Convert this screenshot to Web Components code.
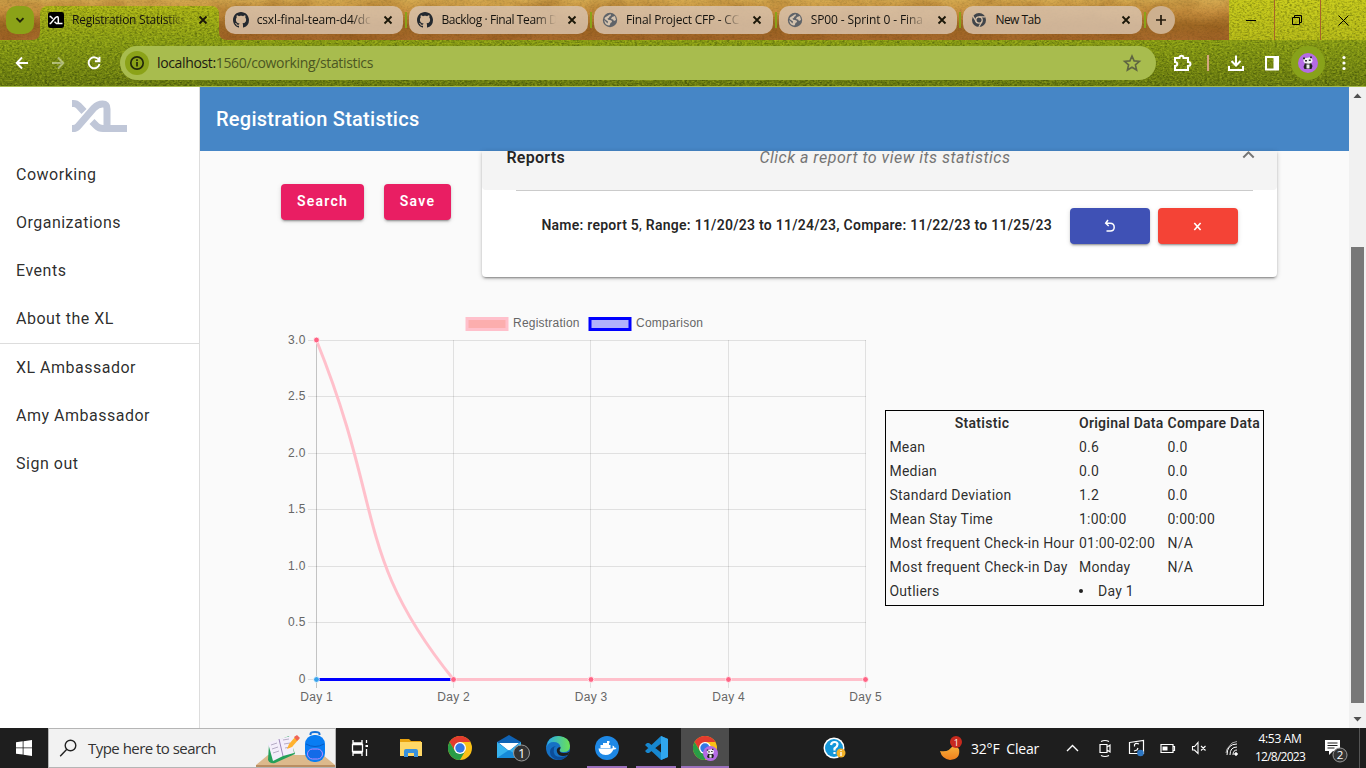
<!DOCTYPE html>
<html lang="en">
<head>
<meta charset="utf-8">
<title>Registration Statistics</title>
<style>
html,body{margin:0;height:100%;overflow:hidden}
body{display:grid;grid-template-rows:87px 641px 40px;width:1366px;height:768px;font-family:Roboto,"Liberation Sans",sans-serif}
</style>
</head>
<body>
<browser-chrome></browser-chrome>
<app-viewport></app-viewport>
<task-bar></task-bar>

<template id="t-chrome">
<style>
:host{display:grid;grid-template-rows:40px 46px 1px;position:relative;overflow:hidden;font-family:"Open Sans","Noto Sans",sans-serif;color:#1c1a12;isolation:isolate}
.tex{position:absolute;inset:0;z-index:-1}
.tex filter{color-interpolation-filters:sRGB}
.strip{display:flex;align-items:center;padding-left:6px;height:40px;box-sizing:border-box}
.menu{width:28px;height:28px;border-radius:10px;background:#8ba218;display:grid;place-items:center;margin-right:6px}
.tabs{display:flex;height:40px}
.plus{width:28px;height:28px;border-radius:50%;background:#cdb08f;display:grid;place-items:center;margin-left:-1.200px}
.win{display:flex;margin-left:auto;width:137px;height:40px}
.win svg{flex:1;border-left:1px solid #a8642a}
.win svg:first-child{border:0;flex:none;width:45px}
.bar{display:flex;align-items:center;height:46px;padding-left:10px;box-sizing:border-box}
.bar>svg{flex:none}
.nav{margin-right:12px}
.omni{display:flex;align-items:center;width:1036px;height:34px;border-radius:17px;background:#a8bc4e;box-sizing:border-box;padding:0 12px 0 5px;margin-left:2px;font-size:14px}
.info{width:24px;height:24px;border-radius:50%;background:#8ba218;display:grid;place-items:center;margin-right:8px}
.star{margin-left:auto}
.omni fit-text{position:relative;top:-1px}
.path{color:#4c5722}
.sep{width:2px;height:16px;background:#d3a780;margin:0 15px 0 13px}
.ava{width:34px;height:34px;border-radius:50%;background:#88a21a;display:grid;place-items:center}
.line{background:#a8bc4e}
</style>
<svg class="tex" width="1366" height="87">
<defs>
<linearGradient id="wood" x2="0" y2="1"><stop offset="0" stop-color="#d5aa50"/><stop offset=".3" stop-color="#c8903f"/><stop offset=".65" stop-color="#9f6824"/><stop offset="1" stop-color="#a8692c"/></linearGradient>
<linearGradient id="grass" x2="0" y2="1"><stop offset="0" stop-color="#b2b816"/><stop offset=".5" stop-color="#869a14"/><stop offset="1" stop-color="#64760f"/></linearGradient>
<linearGradient id="lime" x2="0" y2="1"><stop offset="0" stop-color="#c6c81c"/><stop offset="1" stop-color="#b5b818"/></linearGradient>
<filter id="n" x="0" y="0" width="1" height="1"><feTurbulence type="fractalNoise" baseFrequency=".4 .6" numOctaves="2" seed="4"/><feColorMatrix values="0 0 0 0 0  0 0 0 0 0.05  0 0 0 0 0  2.6 0 0 0 -1.1"/></filter>
<filter id="n2" x="0" y="0" width="1" height="1"><feTurbulence type="fractalNoise" baseFrequency=".4 .6" numOctaves="2" seed="9"/><feColorMatrix values="0 0 0 0 .9  0 0 0 0 .95  0 0 0 0 .2  2.6 0 0 0 -1.1"/></filter>
<filter id="w" x="0" y="0" width="1" height="1"><feTurbulence type="fractalNoise" baseFrequency=".03 .06" numOctaves="3" seed="7"/><feColorMatrix values="0 0 0 0 .5  0 0 0 0 .28  0 0 0 0 .05  2 0 0 0 -.8"/></filter>
<clipPath id="g"><path d="M0 40H32Q40 40 40 32V14Q40 6 48 6H211Q219 6 219 14V32Q219 40 227 40H1229V0H1366V86H0Z"/></clipPath>
</defs>
<rect width="1229" height="40" fill="url(#wood)"/><rect width="1229" height="40" filter="url(#w)" opacity=".35"/><rect width="1229" height="40" filter="url(#n)" opacity=".1"/>
<g clip-path="url(#g)"><rect width="1366" height="86" fill="url(#grass)"/><rect x="1229" width="137" height="40" fill="url(#lime)"/><rect width="1366" height="86" filter="url(#n)" opacity=".3"/><rect width="1366" height="86" filter="url(#n2)" opacity=".3"/></g>
</svg>
<div class="strip">
<div class="menu"><svg width="12" height="12"><path d="M2.5 4.2 6 7.7 9.500 4.200" fill="none" stroke="#20240a" stroke-width="1.9"/></svg></div>
<div class="tabs">
<chrome-tab active icon="xl" w="114">Registration Statistics</chrome-tab>
<chrome-tab icon="github" w="114">csxl-final-team-d4/dc</chrome-tab>
<chrome-tab icon="github" w="116">Backlog · Final Team D</chrome-tab>
<chrome-tab icon="globe" w="113">Final Project CFP - CC</chrome-tab>
<chrome-tab icon="globe" w="112">SP00 - Sprint 0 - Fina</chrome-tab>
<chrome-tab icon="newtab" w="45">New Tab</chrome-tab>
</div>
<div class="plus"><svg width="12" height="12"><path d="M6 1v10M1 6h10" stroke="#241a0e" stroke-width="1.7"/></svg></div>
<div class="win">
<svg height="40" viewBox="0 0 45 40"><path d="M17 20.500h10" stroke="#000"/></svg>
<svg height="40" viewBox="0 0 45 40"><path d="M17.500 17.500h7v7h-7zM19.500 17v-1.500h7v7H25" fill="none" stroke="#000"/></svg>
<svg height="40" viewBox="0 0 45 40"><path d="M17.500 15.500l10 10m0-10-10 10" stroke="#000"/></svg>
</div>
</div>
<div class="bar">
<svg class="nav" width="24" height="24" fill="none" stroke="#fff" stroke-width="1.9"><path d="M18 12H7M12 6.500 6.700 12l5.300 5.500"/></svg>
<svg class="nav" width="24" height="24" fill="none" stroke="#fff" stroke-opacity=".42" stroke-width="1.900"><path d="M6 12h11M12 6.500 17.300 12 12 17.500"/></svg>
<svg class="nav" width="24" height="24" fill="none" stroke="#fff" stroke-width="1.900"><path d="M17 9.200A5.500 5.500 0 1 0 17.500 13M17.500 5.800v4.400h-4.600"/></svg>
<div class="omni"><span class="info"><svg width="16" height="16" fill="none" stroke="#23290b" stroke-width="1.700"><circle cx="8" cy="8" r="6.200"/><path d="M8 7v4.500M8 4.300v1.700"/></svg></span>
<fit-text w="216">localhost:<span class="path">1560/coworking/statistics</span></fit-text>
<svg class="star" width="24" height="24" viewBox="0 0 24 24"><path d="m12 5 2.100 4.900 5.300.4-4 3.500 1.200 5.200-4.600-2.800L7.400 19l1.200-5.200-4-3.500 5.300-.4z" fill="none" stroke="#5f6542" stroke-width="1.600"/></svg></div>
<svg width="24" height="24" style="margin-left:14px" fill="none" stroke="#fff" stroke-width="2"><path d="M5 7h4.500q0-2.300 2-2.300t2 2.300H18v4q2.500 0 2.500 2t-2.500 2v4H5v-4q2.300-.3 2.300-2T5 11z"/></svg>
<i class="sep"></i>
<svg width="24" height="24" fill="none" stroke="#fff" stroke-width="2"><path d="M12 4.500v9.500M7.500 10l4.500 4.500L16.500 10M5 15v4h14v-4"/></svg>
<svg width="24" height="24" style="margin-left:12px" fill="none" stroke="#fff" stroke-width="2"><path d="M6 6h12v12.500H6z"/><path d="M16 6v12" stroke-width="5"/></svg>
<span class="ava" style="margin-left:7px"><panda-icon></panda-icon></span>
<svg width="6" height="20" style="margin-left:16px" fill="#fff"><circle cx="3" cy="4.500" r="1.600"/><circle cx="3" cy="10" r="1.600"/><circle cx="3" cy="15.500" r="1.600"/></svg>
</div>
<div class="line"></div>
</template>

<template id="t-tab">
<style>
:host{display:flex;width:184.700px;height:40px;align-items:center;font-size:12px}
.b{display:flex;align-items:center;width:178.700px;height:28px;border-radius:10px;background:rgba(216,194,172,.85);box-sizing:border-box;padding-left:8px}
:host([active]) .b{background:none}
.i{width:16px;height:16px;margin-right:8px;flex:none}
.t{width:115px;overflow:hidden;white-space:nowrap;-webkit-mask:linear-gradient(90deg,#000 82%,transparent);color:#15130f;line-height:20px}
.t.short{-webkit-mask:none}
.x{margin-left:10px;flex:none}
.s{width:2px;height:16px;background:#8ba218;margin-left:2px}
:host([active]) .s{background:none}
</style>
<div class="b"><span class="i"></span><span class="t"><fit-text><slot></slot></fit-text></span><svg class="x" width="12" height="12"><path d="m2.500 2.500 7 7m0-7-7 7" stroke="#1a1608" stroke-width="1.800"/></svg></div><i class="s"></i>
</template>

<template id="t-view">
<style>
:host{display:grid;grid-template-columns:200px 1149px 17px;height:641px;overflow:hidden}
main{background:#fafafa;overflow:hidden;display:flex;flex-direction:column}
header{height:64px;flex:none;background:#4686c6;color:#fff;font-weight:500;font-size:20px;line-height:64px;padding-left:16px}
.top{display:flex;height:149px;align-items:flex-start}
.acts{display:flex;gap:20px;padding:33px 0 0 81px;width:201px}
.bot{display:flex;align-items:flex-start}
stat-table{margin:110px 0 0 3px}
</style>
<side-nav></side-nav>
<main><header><fit-text w="203.500">Registration Statistics</fit-text></header>
<div class="top"><div class="acts"><mat-btn w="83" tw="51">Search</mat-btn><mat-btn w="67" tw="35.500">Save</mat-btn></div><report-panel></report-panel></div>
<div class="bot"><line-chart></line-chart><stat-table></stat-table></div>
</main>
<scroll-bar></scroll-bar>
</template>

<template id="t-side">
<style>
:host{display:block;background:#fff;border-right:1px solid #ddd;box-sizing:border-box;font-size:16px;color:rgba(0,0,0,.84);font-weight:400}
svg{display:block;margin:13px 0 0 72px}
nav{padding-top:18px}
nav div{height:48px;line-height:48px;padding-left:16px}
hr{border:0;height:1px;background:#ddd;margin:0}
</style>
<svg width="55" height="33" fill="none" stroke="#c0c7d8" stroke-width="7"><path d="M0 3.500h1.500q3 0 5 2.200L12 11.500M0 28.500h1q3 0 5-2.200L22 8q4-4 8.500-4 4.500 0 4.500 5v19.500M55 28.500H31q-4 0-6.500-2.500L20 21.500"/></svg>
<nav><div><fit-text w="80.500">Coworking</fit-text></div><div><fit-text w="105">Organizations</fit-text></div><div><fit-text w="50.500">Events</fit-text></div><div><fit-text w="98">About the XL</fit-text></div><hr><div><fit-text w="120">XL Ambassador</fit-text></div><div><fit-text w="134">Amy Ambassador</fit-text></div><div><fit-text w="62.500">Sign out</fit-text></div></nav>
</template>

<template id="t-btn">
<style>
:host{display:block;height:36px;border-radius:4px;background:var(--c,#e91e63);color:#fff;font-weight:600;font-size:14px;line-height:35px;text-align:center;box-shadow:0 3px 1px -2px rgba(0,0,0,.2),0 2px 2px rgba(0,0,0,.14),0 1px 5px rgba(0,0,0,.12)}
</style><slot></slot>
</template>

<template id="t-panel">
<style>
:host{display:block;width:795px;height:126px;margin-left:.4px;background:#fff;border-radius:0 0 4px 4px;box-shadow:0 3px 1px -2px rgba(0,0,0,.2),0 2px 2px rgba(0,0,0,.14),0 1px 5px rgba(0,0,0,.2);color:rgba(0,0,0,.87)}
.h{display:flex;height:39px;background:#f4f4f4;border-radius:0 0 4px 4px;padding-left:24px;font-size:16px;line-height:13px}
.h b{font-weight:600;width:253px}
.h i{color:#757575}
.h svg{margin-left:auto;margin-right:22px;margin-top:-1px}
.r{border-top:1px solid #cbcbcb;margin:0 24.500px 0 34px;padding:17px 0 0 25px;display:flex;font-size:14px;font-weight:600;line-height:35px}
mat-btn svg{display:block;margin:auto}
</style>
<div class="h"><b><fit-text w="58.500">Reports</fit-text></b><i><fit-text w="251">Click a report to view its statistics</fit-text></i><svg width="13" height="12"><path d="M1.300 7.500 6.500 2.300l5.200 5.200" fill="none" stroke="#757575" stroke-width="2"/></svg></div>
<div class="r"><fit-text w="510.500">Name: report 5<span style="font-weight:400">,</span> Range: 11/20/23 to 11/24/23, Compare: 11/22/23 to 11/25/23</fit-text>
<mat-btn w="80" style="--c:#3f51b5;margin-left:17.700px"><svg width="14" height="36" fill="none" stroke="#fff" stroke-width="1.500"><path d="M5 12 2.700 15.200l3 2.800M3 15.200H7q4.200 0 4.200 4t-4.200 3.800H3.500"/></svg></mat-btn>
<mat-btn w="80" style="--c:#f44336;margin-left:8px"><svg width="14" height="36"><path d="m3.300 15 6.300 7m0-7-6.300 7" stroke="#fff" stroke-width="1.600"/></svg></mat-btn></div>
</template>

<template id="t-chart">
<style>:host{display:block;width:682px;height:428px}svg{display:block;font:12px "Liberation Sans",Arial,sans-serif}</style>
<svg width="682" height="428" viewBox="200 300 682 428"></svg>
</template>

<template id="t-stat">
<style>
:host{display:block;font-size:14px;color:rgba(0,0,0,.84)}
table{border:1px solid #000;border-spacing:2px;width:379px;table-layout:fixed;line-height:20px;height:196px}
tr{height:22px}
td,th{padding:0 1px 2px 1.500px;white-space:nowrap;height:20px;box-sizing:content-box}th{font-weight:600}
td fit-text,th fit-text{vertical-align:top}
.p{display:flex;align-items:center;height:20px}.p::before{content:"";width:4px;height:4px;border-radius:50%;background:#222;margin-right:15px}
</style>
<table><colgroup><col style="width:187.500px"><col style="width:86.500px"><col></colgroup><tbody></tbody></table>
</template>

<template id="t-scroll">
<style>:host{display:flex;flex-direction:column;align-items:center;background:#f1f1f1}i{width:13px;height:456px;background:#787878;margin-top:143px}svg{display:block}</style>
<svg width="17" height="17"><path d="M4.500 11 8.500 6.500l4 4.500z" fill="#505050"/></svg><i></i>
<svg width="17" height="17" style="margin-top:auto"><path d="M4.500 6 8.500 10.500l4-4.500z" fill="#505050"/></svg>
</template>

<template id="t-task">
<style>
:host{display:flex;height:40px;background:#1e1e1e;color:#fff;font-family:"Open Sans","Noto Sans",sans-serif}
svg{display:block;flex:none}
.search{width:288px;height:40px;box-sizing:border-box;background:#f2f2f2;border:1px solid #b5b5b5;color:#333;display:flex;font-size:15px;line-height:38px}
.app{width:40px;height:40px;margin:0 4.500px 0 4.500px;box-sizing:border-box;display:grid;place-items:center}
.run{border-bottom:2px solid #9a70bd;padding-top:2px}
.on{background:#4c4c4c;width:48px;margin:0 0 0 .5px;position:relative}
.on panda-icon{position:absolute;left:22px;top:18px;transform:scale(.75);transform-origin:0 0}
.tray{margin-left:auto;display:flex;align-items:center}
.clock{width:70px;text-align:center;font-size:12px;line-height:18px}
</style>
<svg width="48" height="40" fill="#fff"><path d="M16 14.300 22.700 13.300V19.500H16zM23.500 13.200 32 12v7.500h-8.500zM16 20.300h6.700v6.300L16 25.700zM23.500 20.300H32V28l-8.500-1.200z"/></svg>
<div class="search"><svg width="39" height="38" fill="none" stroke="#222" stroke-width="1.400"><circle cx="21.500" cy="16.500" r="5.300"/><path d="m17.800 20.300-6.600 6.900"/></svg><fit-text w="128">Type here to search</fit-text>
<svg width="79" height="38" viewBox="0 0 79 38" style="margin-left:auto"><path d="M12 26H67l12 10v2H0v-2z" fill="#dcb98c"/><path d="M0 36h79v2H0z" fill="#b98e61"/><path d="m13 15 20-8 6 18-20 9q-5 1-7-3z" fill="#24a05a"/><path d="m12 14 11-4 12-3 3 17-11 3-10 5z" fill="#f4eefb"/><path d="m23 10 4 17" stroke="#9c87b8"/><path d="m15 16 6-2m-5 6 6-2m-5 6 6-2m4-11 6-1m-5 5 6-1m-5 5 5-1" stroke="#a69bb8" stroke-width=".8"/><path d="m31 20 2-5 7-8 3 3-7 8z" fill="#ffb22e"/><path d="m38 8 3-2 3 3-3 3z" fill="#ef6455"/><rect x="49" y="6" width="20" height="27" rx="9" fill="#087df3"/><path d="M54.500 6V5q0-2 4.500-2t4.500 2v1" fill="none" stroke="#1270d8" stroke-width="2"/><path d="M50 15q9 5 18 0" stroke="#075ac4" fill="none"/><rect x="51.500" y="20" width="15" height="10" rx="5" fill="#126be8" stroke="#b78bff"/></svg></div>
<svg width="46" height="40" fill="none" stroke="#fff" stroke-width="1.300"><path d="M17 12v3h9v-3M17 28v-3h9v3M16.500 16.500h10v7h-10zM30.500 12v3M30.500 21v7"/><path d="M29.500 18h2.500" stroke-width="2"/></svg>
<div class="app" style="margin-left:9px"><svg width="22" height="20"><path d="M0 1h9l2 2H21v15H0z" fill="#e9a30f"/><path d="M0 4h22v14H0z" fill="#ffd867"/><path d="M4 19v-6q0-2 2-2h10q2 0 2 2v6h-4v-4H8v4z" fill="#3991dc"/></svg></div>
<div class="app"><chrome-logo></chrome-logo></div>
<div class="app"><svg width="34" height="28" viewBox="0 0 34 28" style="margin-left:8px"><path d="M0 8 12 1l12 7v15H0z" fill="#0f62b4"/><path d="M2 9h20L12 17z" fill="#fff"/><path d="m0 8 12 9L24 8v16H0z" fill="#37b3ee"/><path d="m0 24 12-8 12 8z" fill="#168ad8"/><circle cx="24.500" cy="19" r="8" fill="#333" stroke="#999"/><text x="21" y="23.800" font-size="13" fill="#fff">1</text></svg></div>
<div class="app"><svg width="24" height="24"><defs><linearGradient id="e"><stop stop-color="#28a9ed"/><stop offset="1" stop-color="#6be254"/></linearGradient></defs><circle cx="12" cy="12" r="12" fill="#1671c4"/><path d="M.5 11Q2 0 12.500 0 24 1 24 10q0 6-6.500 6-4 0-4-2 1-1 1-3-1-5-7-5-5 0-7 5" fill="url(#e)"/><path d="M8 12q-2 9 7 9 3 0 7-2-4 5-10 5-8-2-8-8 0-5 6-6-2 1-2 2" fill="#0c4d99"/><path d="M14.500 11q0 2-1 3 0 3 4 3 4 0 6-1.500l-1.500 3.200Q17 21 13 19q-3-3-2-6 1-2 3.500-2" fill="#1e1e1e"/></svg></div>
<div class="app run"><svg width="24" height="24"><circle cx="12" cy="12" r="12" fill="#1e88e5"/><path d="M3.500 12.500H17q1-.5.500-3 2 .5 2 2.300 1.500-.3 2 .2-1 1.800-3 1.500Q16 19 10.500 19 4 19 3.500 12.500M5.500 9h10v3h-10zM8 7h6v2H8zM12 5h2.500v2H12z" fill="#fff"/></svg></div>
<div class="app run"><svg width="24" height="24"><path d="m17 0 7 3v18l-7 3L1 9l2-2 2 0 12 9.500V7.500L5 17H3l-2-2z" fill="#1787cf"/><path d="m17 0 7 3v18l-7 3z" fill="#30a6ed"/></svg></div>
<div class="app run on"><chrome-logo></chrome-logo><panda-icon></panda-icon></div>
<div class="tray">
<svg width="24" height="24" style="margin-right:92px"><circle cx="11" cy="12" r="10.500" fill="#fff"/><circle cx="11" cy="12" r="9" fill="#1597d9"/><path d="M8 9q.5-3 3.500-3 3 0 3 2.500 0 2-3 4v2M11.500 16v2" fill="none" stroke="#fff" stroke-width="2.200"/><circle cx="18" cy="17" r="4.500" fill="#f3b229"/><path d="M18 14v1m0 1v4" stroke="#fff" stroke-width="1.300"/></svg>
<svg width="26" height="28" style="margin-right:6px"><defs><linearGradient id="m" x2="0" y2="1"><stop stop-color="#f8ba42"/><stop offset="1" stop-color="#ef7f1c"/></linearGradient></defs><path d="M1 17q9 2 14-7l5 5q2 10-9 11-8-1-10-9" fill="url(#m)"/><circle cx="17" cy="8" r="6" fill="#c72a1e"/><text x="14.800" y="11.500" font-size="9" fill="#fff">1</text></svg>
<fit-text w="68" style="font-size:14px">32°F  Clear</fit-text>
<svg width="30" height="40" style="margin-left:19px" fill="none" stroke="#fff" stroke-width="1.400"><path d="m9 23 5.500-5.500L20 23"/></svg>
<svg width="34" height="40" fill="none" stroke="#fff" stroke-width="1.200"><path d="M12 16.500h7v8h-7zM19 19l3-2v7l-3-2M13 13.500q4-2 8 0M13 27.500q4 2 8 0"/></svg>
<svg width="32" height="40" fill="none" stroke="#fff" stroke-width="1.200"><path d="m7.500 14.500 14-2v13h-14zM17 16q-3-1.500-4.500.5v2M12 23l3-1 1-2"/><circle cx="18.500" cy="25" r="3.300" fill="#2d76c2" stroke="none"/></svg>
<svg width="32" height="40" fill="none" stroke="#fff" stroke-width="1.200"><path d="M7 16.500h12v8H7zM19 18.500h1.500v4H19"/><path d="M8.500 18.500h5v4h-5z" fill="#fff" stroke="none"/></svg>
<svg width="32" height="40" fill="none" stroke="#fff" stroke-width="1.100"><path d="M6.500 18.500h2l3.500-4v11l-3.500-3.500h-2zM15 18l4.500 4.500m0-4.500-4.500 4.500"/></svg>
<svg width="27" height="40" fill="none" stroke="#fff" stroke-width="1"><path d="M9 27q0-11 10-11M12 27q0-8 7-8M15 27q0-5 4-5"/><circle cx="18" cy="26" r="1.300" fill="#fff"/><path d="m8 25 1-4 5-6 5-1.500" opacity=".6"/></svg>
<div class="clock"><fit-text w="43">4:53 AM</fit-text><br><fit-text w="50">12/8/2023</fit-text></div>
<svg width="51" height="40"><path d="M10 12h15v11H18l-4 4v-4h-4z" fill="#fff"/><path d="M12.500 15h10M12.500 17.500h10M12.500 20h7" stroke="#1e1e1e"/><circle cx="25" cy="27" r="7" fill="#333" stroke="#999"/><text x="21.800" y="31.300" font-size="11.500" fill="#fff">2</text><path d="M44.500 0v40" stroke="#555"/></svg>
</div>
</template>

<script>
const tpl = id => document.getElementById(id).content.cloneNode(true);
const define = (name, id, init) => customElements.define(name, class extends HTMLElement {
  connectedCallback() {
    if (this.shadowRoot) return;
    const root = this.attachShadow({mode: 'open'});
    root.append(tpl(id));
    if (init) init(this, root);
  }
});

/* Text run whose tracking is adjusted to reach a given advance width. */
customElements.define('fit-text', class extends HTMLElement {
  connectedCallback() {
    if (!this.shadowRoot) this.attachShadow({mode: 'open'}).innerHTML = '<style>:host{display:inline-block;white-space:pre;flex:none}</style><slot></slot>';
    this.fit();
  }
  fit() {
    const w = parseFloat(this.getAttribute('w'));
    if (!w) return;
    this.style.letterSpacing = '0px';
    const n = (this.dataset.n || this.textContent).length;
    this.style.letterSpacing = ((w - this.getBoundingClientRect().width) / n) + 'px';
  }
});

const draw = (name, css, svg) => customElements.define(name, class extends HTMLElement {
  connectedCallback() {
    if (!this.shadowRoot) this.attachShadow({mode: 'open'}).innerHTML = `<style>:host{display:block;${css}}svg{display:block}</style>${svg}`;
  }
});
draw('chrome-logo', 'width:24px;height:24px', '<svg width="24" height="24"><circle cx="12" cy="12" r="12" fill="#fbc116"/><path d="M1.600 6A12 12 0 0 1 22.400 6H12L7 15z" fill="#e33b2e"/><path d="M1.600 6A12 12 0 0 0 12 24l5.200-9L12 17.500 7 15z" fill="#299c46"/><circle cx="12" cy="12" r="6" fill="#fff"/><circle cx="12" cy="12" r="4.700" fill="#3478e5"/></svg>');
draw('panda-icon', 'width:20px;height:20px', '<svg width="20" height="20"><circle cx="10" cy="10" r="10" fill="#b56be4"/><path d="M7 10h6l1.500 3-1 3H6.500l-1-2z" fill="#222"/><path d="M8.500 11.500h3v4h-3z" fill="#eee"/><path d="M5.500 5.500 13.500 4l1 3.500q0 3-4 3.200-4.500 0-5-2.500z" fill="#f3f3f3"/><path d="M5 4.500h2v1.800H5zM12 3.500h2v1.800h-2zM7 7h2v1.500H7zM10.800 6.500h2V8h-2z" fill="#333"/></svg>');

const ICONS = {
  xl: '<svg width="16" height="16"><rect width="16" height="16" rx="2.500" fill="#000"/><path d="M1.500 4.500h1l2.300 2.300M1.500 11.500h1L7.500 5.500q2.800-2 2.800 1V11.500M14.500 11.500H8.500L6.500 9.700" stroke="#fff" stroke-width="1.500" fill="none"/></svg>',
  github: '<svg width="16" height="16" viewBox="0 0 16 16"><path fill="#24292f" d="M8 0C3.580 0 0 3.580 0 8c0 3.540 2.290 6.530 5.470 7.590.4.070.55-.17.55-.38 0-.19-.01-.82-.01-1.490-2.010.37-2.530-.49-2.690-.94-.09-.23-.48-.94-.82-1.130-.28-.15-.68-.52-.01-.53.63-.01 1.080.58 1.230.82.72 1.210 1.870.87 2.330.66.07-.52.28-.87.51-1.070-1.780-.2-3.640-.89-3.640-3.950 0-.87.31-1.590.82-2.150-.08-.2-.36-1.020.08-2.120 0 0 .67-.21 2.200.82.640-.18 1.320-.27 2-.27s1.360.09 2 .27c1.530-1.040 2.200-.82 2.200-.82.440 1.100.160 1.920.080 2.120.51.560.82 1.270.82 2.150 0 3.070-1.870 3.750-3.650 3.950.29.25.54.730.54 1.480 0 1.070-.01 1.930-.01 2.200 0 .21.15.46.55.38A8.010 8.010 0 0 0 16 8c0-4.420-3.580-8-8-8z"/></svg>',
  globe: '<svg width="16" height="16"><circle cx="8" cy="8" r="7.200" fill="#5f6368"/><path d="M8.500 2q1 2-1 2.500-.5 2-2 2 0 1.500 2.500 1.500 2.500.5 2 2-2 .5-2 2.500 0 1-1 1Q2.500 13 2.200 8L5.500 11.500 6 9.500 2.500 7 3 5.500M10 5l3-1 1 4-2 1-1-1.500-2-.5z" fill="#d3c2ae"/></svg>',
  newtab: '<svg width="16" height="16" fill="none"><circle cx="8" cy="8" r="7" fill="#41454a"/><circle cx="8" cy="8" r="3.200" fill="#41454a" stroke="#d5bfa6" stroke-width="1.300"/><path d="M8 4.800h6.400M5.200 9.600 2 4.100M10.800 9.600 7.800 15" stroke="#d5bfa6" stroke-width="1.200"/></svg>'
};
define('chrome-tab', 't-tab', (el, root) => {
  root.querySelector('.i').innerHTML = ICONS[el.getAttribute('icon')];
  const f = root.querySelector('fit-text');
  f.dataset.n = el.textContent;
  f.setAttribute('w', el.getAttribute('w'));
  if (el.getAttribute('w') < 60) root.querySelector('.t').classList.add('short');
  f.fit();
});
define('mat-btn', 't-btn', (el, root) => {
  el.style.width = el.getAttribute('w') + 'px';
  const tw = el.getAttribute('tw');
  if (tw) {
    const f = document.createElement('fit-text');
    f.dataset.n = el.textContent;
    f.setAttribute('w', tw);
    const slot = root.querySelector('slot');
    slot.replaceWith(f);
    f.append(slot);
    f.fit();
  }
});
define('side-nav', 't-side');
define('report-panel', 't-panel');
define('scroll-bar', 't-scroll');
define('line-chart', 't-chart', (el, root) => {
  const xs = [316.5, 453.5, 591, 728.5, 865.5], ys = [340.5, 396.5, 453.5, 509.5, 566.5, 622.5, 679.5];
  let s = '<g stroke="rgba(0,0,0,.1)">';
  xs.forEach((x, i) => s += `<path d="M${Math.floor(x) - (i === 2 ? 1 : 0) + .5} 340V688"${i ? '' : ' stroke="rgba(0,0,0,.22)"'}/>`);
  ys.forEach(y => s += `<path d="M308 ${y}H866"/>`);
  s += '</g><g fill="#666">';
  ['3.0', '2.5', '2.0', '1.5', '1.0', '0.5', '0'].forEach((t, i) => s += `<text x="305.500" y="${ys[i] + 3}" text-anchor="end" textLength="${t.length > 1 ? 17.5 : 7}">${t}</text>`);
  xs.forEach((x, i) => s += `<text x="${x}" y="701" text-anchor="middle" textLength="32.500">Day ${i + 1}</text>`);
  s += '<text x="513" y="327" textLength="66.500">Registration</text><text x="636" y="327" textLength="67">Comparison</text></g>';
  s += '<path d="M467 318.500h40v11h-40z" fill="#fcaeae" stroke="#ffc0cb" stroke-width="3"/><path d="M590 318.500h40v11h-40z" fill="#b0b0fc" stroke="#00f" stroke-width="3"/>';
  s += '<g fill="none" stroke-width="3"><path d="M316.500 679.500H453.500" stroke="#00f"/><path d="M316.500 340.500C385 510 353.800 556 453.500 679.500H865.500" stroke="#ffc0cb"/></g><g stroke="#fff" stroke-width=".8"><circle cx="316.500" cy="340" r="2.900" fill="#ff6384"/><circle cx="316.500" cy="679.500" r="2.900" fill="#36a2eb"/>';
  xs.slice(1).forEach(x => s += `<circle cx="${x}" cy="679.500" r="2.900" fill="#ff6384"/>`);
  root.querySelector('svg').innerHTML = s + '</g>';
});
define('stat-table', 't-stat', (el, root) => {
  const rows = [['Mean|35.500', '0.6|20', '0.0|20'], ['Median|47.500', '0.0|20', '0.0|20'], ['Standard Deviation|122', '1.2|20', '0.0|20'], ['Mean Stay Time|103.500', '1:00:00|47.500', '0:00:00|47.500'], ['Most frequent Check-in Hour|185', '01:00-02:00|76', 'N/A|25.500'], ['Most frequent Check-in Day|178', 'Monday|51.500', 'N/A|25.500'], ['Outliers|50', '*Day 1|36', '']];
  const cell = (c, tag) => {
    const [t, w] = c.replace('*', '').split('|');
    return `<${tag}>${c[0] === '*' ? '<span class="p">' : ''}${t ? `<fit-text w="${w}">${t}</fit-text>` : ''}${c[0] === '*' ? '</span>' : ''}</${tag}>`;
  };
  root.querySelector('tbody').innerHTML = `<tr>${['Statistic|54.500', 'Original Data|84.500', 'Compare Data|92.500'].map(c => cell(c, 'th')).join('')}</tr>` + rows.map(r => `<tr>${r.map(c => cell(c, 'td')).join('')}</tr>`).join('');
});
define('app-viewport', 't-view');
define('browser-chrome', 't-chrome');
define('task-bar', 't-task');
</script>
</body>
</html>
